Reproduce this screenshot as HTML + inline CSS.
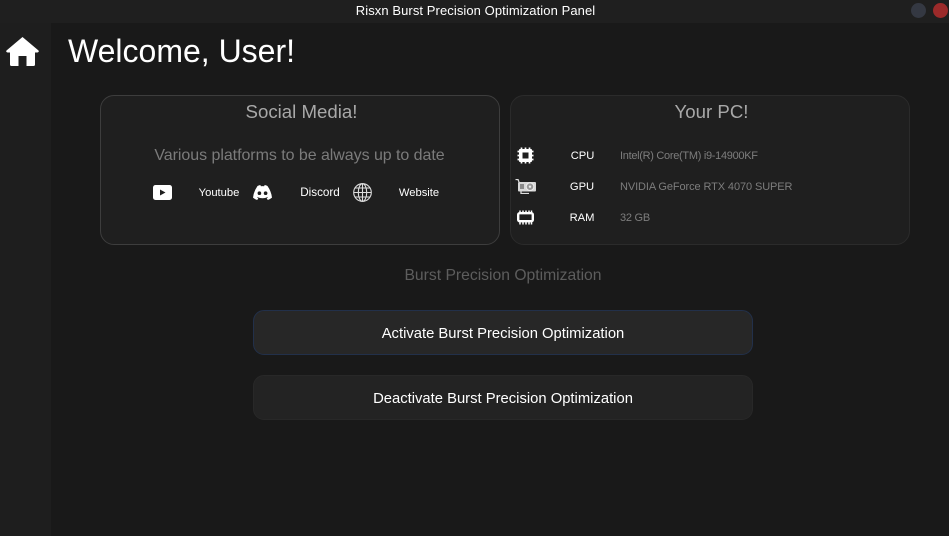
<!DOCTYPE html>
<html><head><meta charset="utf-8"><style>
html,body{margin:0;padding:0;width:949px;height:536px;overflow:hidden;background:#191919;font-family:"Liberation Sans",Arial,sans-serif}
div,span{position:absolute;box-sizing:border-box}
.t{white-space:nowrap;line-height:20px;height:20px;text-align:center}
svg{position:absolute}
</style></head><body>
<div style="left:0;top:0;width:949px;height:23px;background:#1f1f1f"></div>
<div style="left:0;top:23px;width:51px;height:513px;background:#1e1e1e"></div>
<div class="t" style="left:0;width:951px;top:1px;font-size:13px;color:#fff;letter-spacing:.08px">Risxn Burst Precision Optimization Panel</div>
<div style="left:911px;top:3px;width:15px;height:15px;border-radius:50%;background:#343842"></div>
<div style="left:933px;top:3px;width:15px;height:15px;border-radius:50%;background:#9b2a2a"></div>
<svg style="left:6px;top:37px" width="33" height="29" viewBox="0 0 33 29"><path fill="#fff" d="M16.5 0 L32.5 13.5 Q33.5 15 31.5 15.5 H29 V27.5 Q29 29 27.5 29 H20.5 V19 H12.5 V29 H5.5 Q4 29 4 27.5 V15.5 H1.5 Q-.5 15 .5 13.5 Z"/></svg>
<div style="left:68px;top:31px;font-size:32px;line-height:40px;color:#fff;white-space:nowrap">Welcome, User!</div>

<div style="left:100px;top:95px;width:400px;height:150px;border-radius:14px;background:#1f1f1f;border:1px solid #3d3d3d"></div>
<div class="t" style="left:100px;width:403px;top:102px;font-size:18.67px;color:#a8a8a8">Social Media!</div>
<div class="t" style="left:100px;width:399px;top:146px;font-size:16px;color:#7b7b7b;letter-spacing:-.05px">Various platforms to be always up to date</div>
<svg style="left:153px;top:185px" width="19" height="15" viewBox="0 0 19 15"><rect width="19" height="15" rx="2.5" fill="#fff"/><path d="M7 4.5 L12.5 7.5 L7 10.5Z" fill="#1f1f1f"/></svg>
<div class="t" style="left:189px;width:60px;top:183px;font-size:11.2px;color:#fff">Youtube</div>
<svg style="left:253px;top:185px" width="19" height="15" viewBox="0 0 19 15"><path fill="#fff" d="M4.5 1 Q6 .3 7.3 0 L7.9 1.2 Q9.5 1 11.1 1.2 L11.7 0 Q13.2 .3 14.5 1 Q18.3 6.5 19 12.6 Q17 14.2 14.8 15 L13.7 13.2 L15 12.4 L14.6 12.1 Q9.5 14.3 4.4 12.1 L4 12.4 L5.3 13.2 L4.2 15 Q2 14.2 0 12.6 Q.7 6.5 4.5 1Z"/><circle cx="6.4" cy="8.2" r="1.8" fill="#1f1f1f"/><circle cx="12.6" cy="8.2" r="1.8" fill="#1f1f1f"/></svg>
<div class="t" style="left:290px;width:60px;top:183px;font-size:11.7px;color:#fff">Discord</div>
<svg style="left:353px;top:183px" width="19" height="19" viewBox="0 0 19 19" fill="none" stroke="#ddd" stroke-width="1.1"><circle cx="9.5" cy="9.5" r="8.8"/><ellipse cx="9.5" cy="9.5" rx="4.2" ry="8.8"/><path d="M9.5 .7V18.3M.7 9.5H18.3M2 5H17M2 14H17"/></svg>
<div class="t" style="left:389px;width:60px;top:183px;font-size:11.2px;color:#fff">Website</div>

<div style="left:510px;top:95px;width:400px;height:150px;border-radius:14px;background:#1f1f1f;border:1px solid #2b2b2b"></div>
<div class="t" style="left:510px;width:403px;top:102px;font-size:18.67px;color:#a8a8a8">Your PC!</div>
<svg style="left:517px;top:147px" width="17" height="17" viewBox="0 0 17 17"><path stroke="#fff" stroke-width="1.7" d="M4.5 .5V16.5M8.5 .5V16.5M12.5 .5V16.5M.5 4.5H16.5M.5 8.5H16.5M.5 12.5H16.5"/><rect x="2" y="2" width="13" height="13" rx="1" fill="#fff"/><rect x="5.5" y="5.5" width="6" height="6" fill="#1f1f1f"/></svg>
<div class="t" style="left:552.5px;width:60px;top:146px;font-size:11.2px;color:#fff">CPU</div>
<div class="t" style="left:620px;top:146px;font-size:11px;color:#7d7d7d;letter-spacing:-.3px">Intel(R) Core(TM) i9-14900KF</div>
<svg style="left:515px;top:179px" width="21" height="15" viewBox="0 0 21 15"><path d="M.5 .5H3L4 3M6 12V14.5H14" fill="none" stroke="#ddd" stroke-width="1.3"/><rect x="3" y="3" width="18" height="9.5" rx="1" fill="#d8d8d8"/><circle cx="15" cy="7.7" r="3.8" fill="#999" stroke="#eee"/><circle cx="15" cy="7.7" r="1.2" fill="#eee"/><rect x="5" y="5" width="4" height="5" fill="#8a8a8a"/></svg>
<div class="t" style="left:552px;width:60px;top:177px;font-size:11.2px;color:#fff">GPU</div>
<div class="t" style="left:620px;top:177px;font-size:11px;color:#7d7d7d;letter-spacing:-.1px">NVIDIA GeForce RTX 4070 SUPER</div>
<svg style="left:517px;top:210px" width="17" height="15" viewBox="0 0 17 15"><path stroke="#fff" stroke-width="1.5" d="M3 .5V14.5M6 .5V14.5M9 .5V14.5M12 .5V14.5M14.5 .5V14.5"/><rect x="1.2" y="3.2" width="14.6" height="8" rx="1.5" fill="#1f1f1f" stroke="#fff" stroke-width="2.4"/></svg>
<div class="t" style="left:552px;width:60px;top:208px;font-size:11.2px;color:#fff">RAM</div>
<div class="t" style="left:620px;top:208px;font-size:11px;color:#7d7d7d;letter-spacing:-.25px">32 GB</div>

<div class="t" style="left:253px;width:500px;top:266px;font-size:15.7px;color:#5d5d5d">Burst Precision Optimization</div>
<div style="left:253px;top:310px;width:500px;height:45px;border-radius:11px;background:#272727;border:1px solid #22304a"></div>
<div class="t" style="left:253px;width:500px;top:323.5px;font-size:14.8px;color:#fff">Activate Burst Precision Optimization</div>
<div style="left:253px;top:375px;width:500px;height:45px;border-radius:11px;background:#232323;border:1px solid #282828"></div>
<div class="t" style="left:253px;width:500px;top:388.5px;font-size:14.8px;color:#fff">Deactivate Burst Precision Optimization</div>
</body></html>
